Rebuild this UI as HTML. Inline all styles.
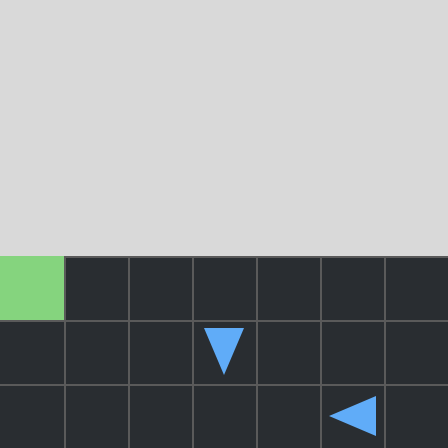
<!DOCTYPE html><html><head><style>
body{margin:0;width:448px;height:448px;background:#d9d9d9;position:relative;overflow:hidden}
div{position:absolute}
.v{width:2px;top:256px;height:192px;background:#5a5a5a}
.h{height:2px;left:0;width:448px;background:#5a5a5a}
</style></head><body>
<div style="left:0;top:256px;width:448px;height:192px;background:#292d31"></div>
<div style="left:64px;top:256px;width:384px;height:2px;background:#5a5a5a"></div>
<div class="h" style="top:320px"></div>
<div class="h" style="top:384px"></div>
<div class="v" style="left:64px"></div>
<div class="v" style="left:128px"></div>
<div class="v" style="left:192px"></div>
<div class="v" style="left:256px"></div>
<div class="v" style="left:320px"></div>
<div class="v" style="left:384px"></div>
<div style="left:0;top:256px;width:64px;height:64px;background:#85d47e"></div>
<svg style="position:absolute;left:0;top:0" width="448" height="448"><polygon points="204,328 244,328 224,375" fill="#60acf8"/><polygon points="329,416 376,396 376,436" fill="#60acf8"/></svg>
</body></html>
